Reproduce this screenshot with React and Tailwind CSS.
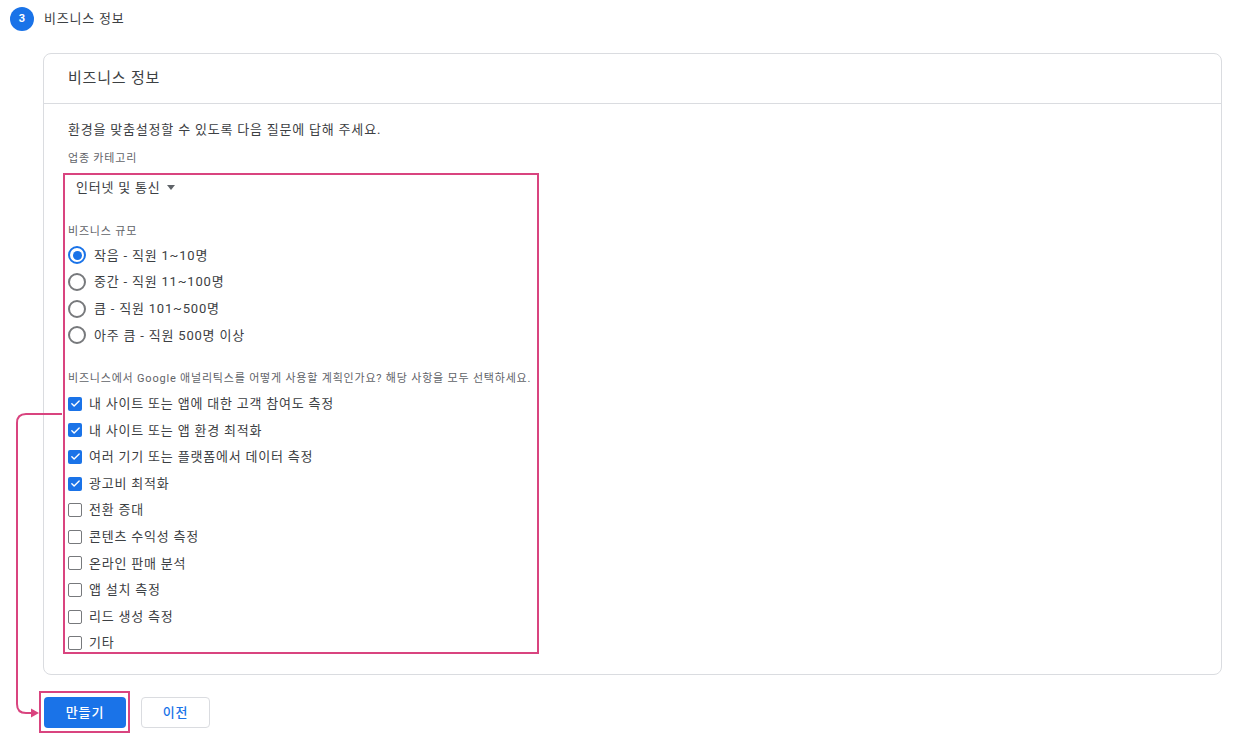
import { useState } from "react";

const sizes = [
  "작음 - 직원 1~10명",
  "중간 - 직원 11~100명",
  "큼 - 직원 101~500명",
  "아주 큼 - 직원 500명 이상",
];

const uses = [
  ["내 사이트 또는 앱에 대한 고객 참여도 측정", true],
  ["내 사이트 또는 앱 환경 최적화", true],
  ["여러 기기 또는 플랫폼에서 데이터 측정", true],
  ["광고비 최적화", true],
  ["전환 증대", false],
  ["콘텐츠 수익성 측정", false],
  ["온라인 판매 분석", false],
  ["앱 설치 측정", false],
  ["리드 생성 측정", false],
  ["기타", false],
];

function Radio({ checked }) {
  return (
    <span
      className={
        "flex h-[18px] w-[18px] shrink-0 items-center justify-center rounded-full border-2 " +
        (checked ? "border-[#1a73e8]" : "border-[#77797c]")
      }
    >
      {checked && <span className="h-[9px] w-[9px] rounded-full bg-[#1a73e8]" />}
    </span>
  );
}

function Check({ checked }) {
  if (checked) {
    return (
      <span className="flex h-[14px] w-[14px] shrink-0 items-center justify-center rounded-[2px] bg-[#1a73e8]">
        <svg width="11" height="11" viewBox="0 0 24 24" fill="none">
          <path d="M4 12.5l5 5L20 6.5" stroke="white" strokeWidth="3" strokeLinecap="round" strokeLinejoin="round" />
        </svg>
      </span>
    );
  }
  return <span className="h-[14px] w-[14px] shrink-0 rounded-[2px] border-[1.5px] border-[#77797c]" />;
}

export default function App() {
  const [size] = useState(0);

  return (
    <div className="relative h-[744px] w-[1234px] overflow-hidden bg-white font-['Roboto','Noto_Sans_CJK_KR',sans-serif] tracking-[0.05em] text-[#3c4043]">
      {/* step header */}
      <div className="flex items-center gap-[10px] pl-[10px] pt-[7px]">
        <span className="flex h-6 w-6 items-center justify-center rounded-full bg-[#1a73e8] text-[11px] font-bold tracking-normal text-white">3</span>
        <span className="text-[13px]">비즈니스 정보</span>
      </div>

      {/* card */}
      <div className="ml-[43px] mt-[22px] w-[1179px] rounded-lg border border-[#dadce0]">
        <div className="flex h-[50px] items-center border-b border-[#dadce0] px-6 text-[15px]">비즈니스 정보</div>
        <div className="px-6 pb-[20px] pt-[16px]">
          <p className="h-5 text-[13px] leading-5">환경을 맞춤설정할 수 있도록 다음 질문에 답해 주세요.</p>
          <p className="mt-[11px] h-4 text-[11px] leading-4 text-[#5f6368]">업종 카테고리</p>

          <div className="-ml-[5px] mt-[6px] w-[476px] border-2 border-[#d9447f] pb-px pl-[3px]">
            <div className="flex h-[24px] items-center gap-[6px] pl-[8px] pt-[1px] text-[13px]">
              인터넷 및 통신
              <svg width="8" height="5" viewBox="0 0 8 5"><path d="M0 0h8L4 5z" fill="#5f6368" /></svg>
            </div>

            <p className="mt-[25px] h-4 text-[11px] leading-4 text-[#5f6368]">비즈니스 규모</p>
            <div className="mt-[2px] flex flex-col">
              {sizes.map((s, i) => (
                <label key={s} className="flex h-[26.7px] items-center gap-[8px] text-[13px]">
                  <Radio checked={i === size} />
                  {s}
                </label>
              ))}
            </div>

            <p className="mt-[22px] h-4 text-[11px] leading-4 text-[#5f6368]">
              비즈니스에서 Google 애널리틱스를 어떻게 사용할 계획인가요? 해당 사항을 모두 선택하세요.
            </p>
            <div className="mt-[9px] flex flex-col gap-[10.6px]">
              {uses.map(([t, c]) => (
                <label key={t} className="flex h-4 items-center gap-[7px] text-[13px]">
                  <Check checked={c} />
                  {t}
                </label>
              ))}
            </div>
          </div>
        </div>
      </div>

      {/* actions */}
      <div className="mt-[16px] flex items-start gap-[11px] pl-[39px]">
        <div className="border-2 border-[#d9447f] pb-[3px] pl-[3px] pr-[2px] pt-[4px]">
          <button className="h-[31px] w-[82px] rounded bg-[#1a73e8] text-[13px] font-medium text-white">만들기</button>
        </div>
        <button className="mt-[6px] h-[31px] w-[69px] rounded border border-[#dadce0] bg-white text-[13px] font-medium text-[#1a73e8]">이전</button>
      </div>

      {/* connector arrow */}
      <svg className="pointer-events-none absolute left-0 top-0" width="70" height="744" viewBox="0 0 70 744" fill="none">
        <path d="M62 414H26Q17 414 17 423V704Q17 713 26 713H33" stroke="#d9447f" strokeWidth="2" />
        <path d="M39 713L31 708.5V717.5Z" fill="#d9447f" />
      </svg>
    </div>
  );
}
